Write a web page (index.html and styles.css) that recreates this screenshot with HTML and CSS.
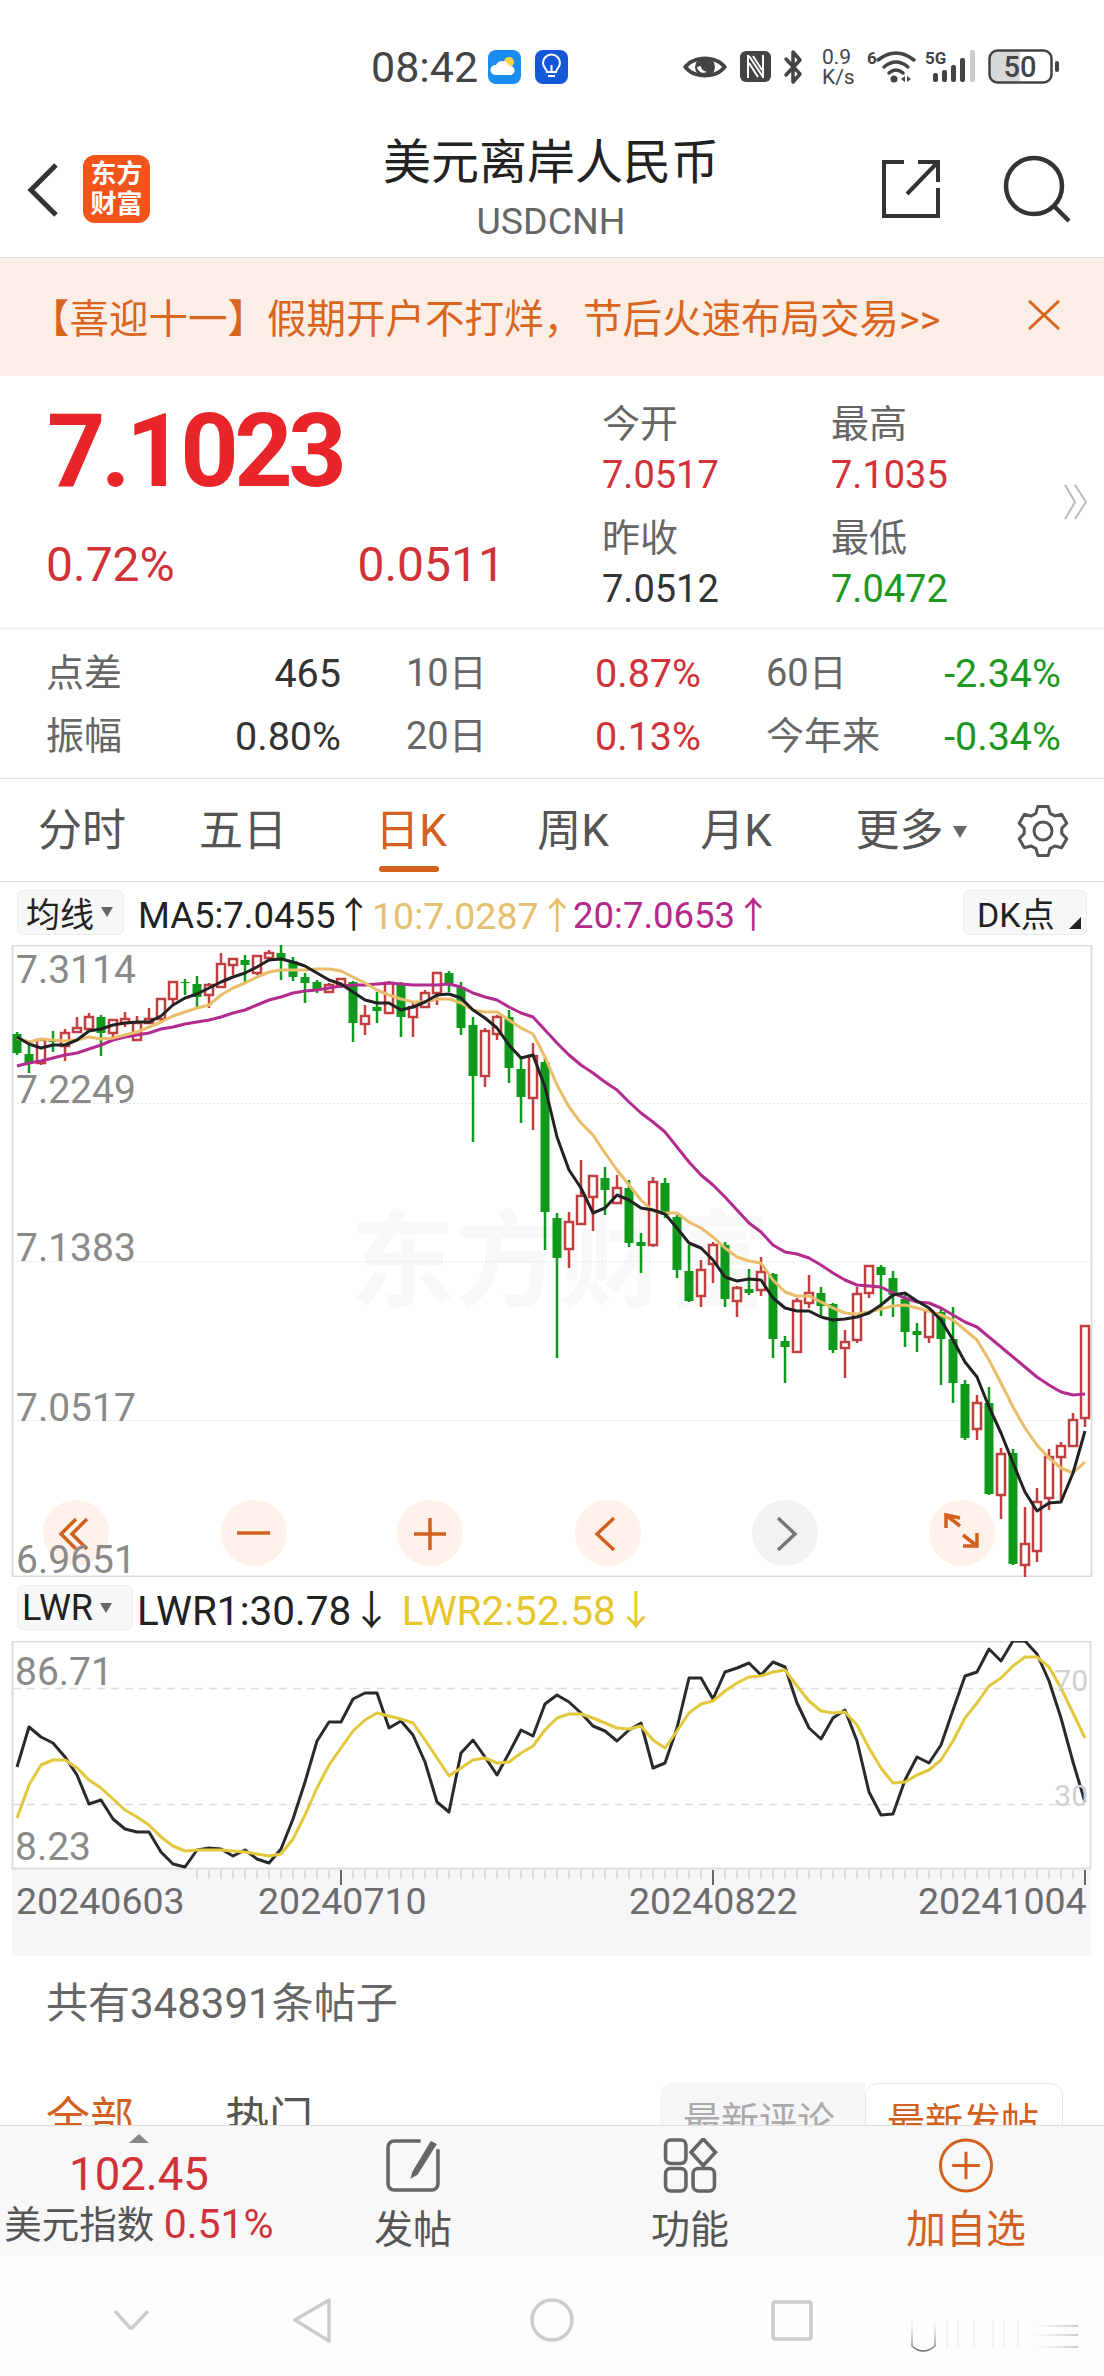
FILE: index.html
```html
<!DOCTYPE html>
<html lang="zh-CN">
<head>
    <meta charset="UTF-8">
    <meta name="viewport" content="width=device-width, initial-scale=1.0">
    <title>美元离岸人民币</title>
    <link rel="stylesheet" href="styles.css">
</head>
<body>
    <div class="status">
        <span class="clock">08:42</span>
        <svg class="app-icon" viewBox="0 0 33 34"><rect width="33" height="34" rx="8" fill="#1a8df0"/><circle cx="21" cy="12" r="5" fill="#f7d34a"/><path d="M7 25a5 5 0 0 1 1-10 7 7 0 0 1 13 1 4.500 4.500 0 0 1 2 9z" fill="#fff"/></svg>
        <svg class="app-icon" viewBox="0 0 33 34"><rect width="33" height="34" rx="8" fill="#1458d8"/><path d="M12 22c0-3-4-4-4-9a8.500 8.500 0 0 1 17 0c0 5-4 6-4 9z" fill="none" stroke="#fff" stroke-width="2"/><path d="M13 26h7M16.500 22v-7" stroke="#fff" stroke-width="2"/></svg>
        <svg class="st-eye" viewBox="0 0 46 30"><path d="M1 15C10 1 36 1 45 15 36 29 10 29 1 15z" fill="#444"/><path d="M6 15C13 6 33 6 40 15 33 24 13 24 6 15z" fill="#fff"/><circle cx="23" cy="15" r="10" fill="#444"/><path d="M15 15c1 5 6 7 10 5-4-1-6-3-6-6z" fill="#fff"/></svg>
        <svg class="st-nfc" viewBox="0 0 31 31"><rect width="31" height="31" rx="6" fill="#444"/><path d="M8 4v23M23 4v23M9 5l14 21M13 5l9 14M9 12l9 14" fill="none" stroke="#fff" stroke-width="2"/></svg>
        <svg class="st-bt" viewBox="0 0 21 36"><path d="M3 10l14 15-7 8V3l7 8L3 26" fill="none" stroke="#444" stroke-width="3.500" stroke-linejoin="round" stroke-linecap="round"/></svg>
        <span class="st-speed"><span>0.9</span><span>K/s</span></span>
        <svg class="st-wifi" viewBox="0 0 48 35"><text x="0" y="15" class="st-tiny">6</text><path d="M11 11Q29-3 47 11M17 18Q29 8 41 18M22 24Q29 18 36 24" fill="none" stroke="#444" stroke-width="3.500" stroke-linecap="round"/><circle cx="27" cy="30" r="3.500" fill="#444"/><path d="M34 30l4-3v6zM40 27l4 3-4 3z" fill="#444"/></svg>
        <svg class="st-signal" viewBox="0 0 50 35"><text x="0" y="15" class="st-tiny">5G</text><g fill="#444"><rect x="8" y="24" width="5" height="9" rx="2"/><rect x="17" y="21" width="5" height="12" rx="2"/><rect x="26" y="16" width="5" height="17" rx="2"/><rect x="35" y="9" width="5" height="24" rx="2"/></g><rect x="45" y="1" width="5" height="32" rx="2" fill="#ccc"/></svg>
        <svg class="st-batt" viewBox="0 0 72 35"><path d="M9 2h23v31H9a7 7 0 0 1-7-7V9a7 7 0 0 1 7-7z" fill="#d8d8d8"/><rect x="1.500" y="1.500" width="62" height="32" rx="8" fill="none" stroke="#444" stroke-width="2.500"/><rect x="67" y="12" width="4" height="11" rx="2" fill="#444"/><text x="32" y="28" text-anchor="middle" class="st-pct">50</text></svg>
    </div>

    <div class="titlebar">
        <svg class="back" viewBox="0 0 32 54"><path d="M29 2L4 27l25 25" fill="none" stroke="#333" stroke-width="5"/></svg>
        <div class="logo"><span>东方</span><span>财富</span></div>
        <div class="title">
            <h1>美元离岸人民币</h1>
            <p>USDCNH</p>
        </div>
        <svg class="share" viewBox="0 0 58 58"><path d="M22 2H2v54h54V28M25 34L55 3M36 2h20v20" fill="none" stroke="#333" stroke-width="4"/></svg>
        <svg class="search" viewBox="0 0 68 68"><circle cx="31" cy="31" r="28" fill="none" stroke="#333" stroke-width="4.500"/><path d="M50 50l16 16" stroke="#333" stroke-width="4.500"/></svg>
    </div>

    <div class="banner">
        <span>【喜迎十一】假期开户不打烊，节后火速布局交易&gt;&gt;</span>
        <svg class="banner-close" viewBox="0 0 32 30"><path d="M1 1l30 28M31 1L1 29" stroke="#d9651f" stroke-width="3"/></svg>
    </div>

    <div class="quote">
        <div class="quote-main">
            <div class="price">7.1023</div>
            <div class="change"><span>0.72%</span><span>0.0511</span></div>
        </div>
        <div class="quote-side">
            <div class="cell"><label>今开</label><b class="up">7.0517</b></div>
            <div class="cell"><label>最高</label><b class="up">7.1035</b></div>
            <div class="cell"><label>昨收</label><b>7.0512</b></div>
            <div class="cell"><label>最低</label><b class="down">7.0472</b></div>
        </div>
        <svg class="more-arrow" viewBox="0 0 25 36"><path d="M2 1l10 17L2 35M12 1l11 17-11 17" fill="none" stroke="#bbb" stroke-width="2"/></svg>
    </div>

    <div class="stats">
        <div class="kv"><label>点差</label><b>465</b></div>
        <div class="kv"><label>10日</label><b class="up">0.87%</b></div>
        <div class="kv"><label>60日</label><b class="down">-2.34%</b></div>
        <div class="kv"><label>振幅</label><b>0.80%</b></div>
        <div class="kv"><label>20日</label><b class="up">0.13%</b></div>
        <div class="kv"><label>今年来</label><b class="down">-0.34%</b></div>
    </div>

    <div class="tabs">
        <span class="tab">分时</span>
        <span class="tab">五日</span>
        <span class="tab tab-on">日K</span>
        <span class="tab">周K</span>
        <span class="tab">月K</span>
        <span class="tab">更多<i class="caret"></i></span>
        <svg class="gear" viewBox="0 0 52 52"><path d="M18.900 8.400L20.800 1.600H31.200L33.100 8.400 37.700 11 44.600 9.300 49.800 18.300 44.800 23.400V28.600L49.800 33.700 44.600 42.700 37.700 41 33.100 43.600 31.200 50.400H20.800L18.900 43.600 14.300 41 7.400 42.700 2.200 33.700 7.200 28.600V23.400L2.200 18.300 7.400 9.300 14.300 11z" fill="none" stroke="#555" stroke-width="3" stroke-linejoin="round"/><circle cx="26" cy="26" r="9" fill="none" stroke="#555" stroke-width="3"/></svg>
    </div>

    <div class="chart-head">
        <span class="pick pick-ma">均线<i class="caret"></i></span>
        <span class="ma ma5">MA5:7.0455<i class="arr">↑</i></span>
        <span class="ma ma10">10:7.0287<i class="arr">↑</i></span>
        <span class="ma ma20">20:7.0653<i class="arr">↑</i></span>
        <span class="pick pick-dk">DK点<i class="corner"></i></span>
    </div>

    <svg id="kline" class="chart" viewBox="0 945 1104 632">
        <text x="350" y="1298" class="watermark">东方财富</text>
        <rect x="12.500" y="945.500" width="1079" height="631" fill="none" stroke="#ddd" stroke-width="2"/>
        <path d="M13 1103.500H1090M13 1261.500H1090M13 1420.500H1090" stroke="#e6e6e6" stroke-dasharray="2 2"/>
        <g id="candles"></g>
        <g id="averages"></g>
        <g class="btn-bg">
            <circle cx="76" cy="1533" r="33"/><circle cx="254" cy="1533" r="33"/><circle cx="430" cy="1533" r="33"/><circle cx="608" cy="1533" r="33"/><circle cx="785" cy="1533" r="33" class="btn-off"/><circle cx="962" cy="1533" r="33"/>
        </g>
        <g class="btn-ic">
            <path d="M76 1519l-15 15 15 15M87 1519l-15 15 15 15"/>
            <path d="M237 1533h33"/>
            <path d="M414 1534h32M430 1518v32"/>
            <path d="M614 1518l-17 16 17 16"/>
            <path d="M778 1518l17 16-17 16" class="ic-off"/>
            <path d="M946 1528v-13l14 3M946 1515l14 11M963 1546h14v-13M977 1546l-14-11"/>
        </g>
        <g class="axis-y">
            <text x="16" y="983">7.3114</text>
            <text x="16" y="1103">7.2249</text>
            <text x="16" y="1261">7.1383</text>
            <text x="16" y="1421">7.0517</text>
            <text x="16" y="1573">6.9651</text>
        </g>
    </svg>

    <div class="chart-head lwr-head">
        <span class="pick pick-lwr">LWR<i class="caret"></i></span>
        <span class="ma">LWR1:30.78<i class="arr">↓</i></span>
        <span class="ma lwr2">LWR2:52.58<i class="arr">↓</i></span>
    </div>

    <svg id="lwr" class="chart chart-low" viewBox="0 1641 1104 315">
        <rect x="12" y="1868" width="1079" height="88" fill="#f6f6f8"/>
        <rect x="12.500" y="1641.500" width="1078" height="227" fill="none" stroke="#ddd" stroke-width="2"/>
        <path d="M13 1688.500H1090M13 1804.500H1090" stroke="#ddd" stroke-width="1.500" stroke-dasharray="8 6"/>
        <g id="lwr-lines"></g>
        <g class="axis-y">
            <text x="15" y="1685">86.71</text>
            <text x="15" y="1860">8.23</text>
        </g>
        <g class="axis-side">
            <text x="1088" y="1691" text-anchor="end">70</text>
            <text x="1088" y="1806" text-anchor="end">30</text>
        </g>
        <g id="ticks"></g>
        <g class="axis-x">
            <text x="16" y="1914">20240603</text>
            <text x="258" y="1914">20240710</text>
            <text x="629" y="1914">20240822</text>
            <text x="918" y="1914">20241004</text>
        </g>
    </svg>

    <div class="posts">
        <div class="posts-count">共有348391条帖子</div>
        <div class="posts-tabs">
            <span class="post-tab post-on">全部</span>
            <span class="post-tab">热门</span>
            <div class="seg">
                <span class="seg-item">最新评论</span>
                <span class="seg-item seg-on">最新发帖</span>
            </div>
        </div>
    </div>

    <div class="bottom">
        <div class="bt-index">
            <i class="tri-up"></i>
            <div class="bt-num">102.45</div>
            <div class="bt-name">美元指数 <span class="up">0.51%</span></div>
        </div>
        <div class="bt-item">
            <svg class="bt-icon" viewBox="0 0 55 54"><path d="M35 3H9a6 6 0 0 0-6 6v36a6 6 0 0 0 6 6h37a6 6 0 0 0 6-6V11" fill="none" stroke="#666" stroke-width="3.500"/><path d="M25 40l2-7L45 3l6 3-19 30z" fill="#666"/></svg>
            <span>发帖</span>
        </div>
        <div class="bt-item">
            <svg class="bt-icon" viewBox="0 0 52 54"><g fill="none" stroke="#666" stroke-width="3.500"><rect x="2" y="2" width="20" height="23" rx="5"/><path d="M39 1l12 13-12 13-12-13z"/><rect x="2" y="30" width="20" height="22" rx="5"/><rect x="29" y="30" width="21" height="22" rx="5"/></g></svg>
            <span>功能</span>
        </div>
        <div class="bt-item bt-add">
            <svg class="bt-icon" viewBox="0 0 56 56"><circle cx="28" cy="28" r="26" fill="none" stroke="#d2601e" stroke-width="3"/><path d="M14 28h28M28 14v28" stroke="#d2601e" stroke-width="3"/></svg>
            <span>加自选</span>
        </div>
    </div>

    <div class="nav">
        <svg class="nav-down" viewBox="0 0 37 20"><path d="M2 1l16 18L35 1" fill="none" stroke="#ccc" stroke-width="3.500"/></svg>
        <svg class="nav-back" viewBox="0 0 39 45"><path d="M37 2v41L3 22z" fill="none" stroke="#ccc" stroke-width="3.500" stroke-linejoin="round"/></svg>
        <svg class="nav-home" viewBox="0 0 44 44"><circle cx="22" cy="22" r="20" fill="none" stroke="#ccc" stroke-width="3.500"/></svg>
        <svg class="nav-recent" viewBox="0 0 42 41"><rect x="2" y="2" width="38" height="37" rx="2" fill="none" stroke="#ccc" stroke-width="3.500"/></svg>
        <svg class="nav-smudge" viewBox="0 0 195 38">
            <defs>
                <linearGradient id="fadeDown" gradientUnits="userSpaceOnUse" x1="0" y1="0" x2="0" y2="36"><stop offset="0" stop-color="#ccc" stop-opacity="0"/><stop offset="1" stop-color="#555"/></linearGradient>
                <linearGradient id="fadeRight" gradientUnits="userSpaceOnUse" x1="145" y1="0" x2="193" y2="0"><stop offset="0" stop-color="#ddd" stop-opacity="0"/><stop offset="1" stop-color="#bbb"/></linearGradient>
            </defs>
            <path d="M27 2V28Q38 38 50 28V2" fill="none" stroke="url(#fadeDown)" stroke-width="1.500"/>
            <path d="M62 2V30M73 2V30M89 2V30M108 2V30M119 2V30M133 2V30" stroke="#efefef" stroke-width="1.500"/>
            <path d="M145 8H193M145 17H193M145 29H193" stroke="url(#fadeRight)" stroke-width="1.500"/>
        </svg>
    </div>

    <script src="chart.js"></script>
</body>
</html>
```

FILE: styles.css
```css
* {
    box-sizing: border-box;
}
body {
    margin: 0;
    width: 1104px;
    background-color: #fff;
    color: #333;
    font-family: Roboto, "Noto Sans CJK SC", sans-serif;
}
h1, p {
    margin: 0;
    font-weight: normal;
}
label, b {
    font-weight: normal;
}
i {
    font-style: normal;
}
.up {
    color: #d03238;
}
.down {
    color: #1c971f;
}

/* status bar */
.status {
    display: flex;
    align-items: center;
    height: 135px;
    padding: 0 0 2px 371px;
}
.status svg {
    overflow: visible;
}
.clock {
    font-size: 43px;
    color: #444;
    width: 117px;
}
.app-icon {
    width: 33px;
    height: 34px;
    margin-right: 14px;
}
.st-eye {
    width: 46px;
    height: 30px;
    margin-left: 100px;
}
.st-nfc {
    width: 31px;
    height: 31px;
    margin-left: 12px;
}
.st-bt {
    width: 21px;
    height: 36px;
    margin-left: 12px;
}
.st-speed {
    display: flex;
    flex-direction: column;
    width: 40px;
    margin-left: 18px;
    font-size: 21px;
    line-height: 20px;
    color: #444;
}
.st-wifi {
    width: 48px;
    height: 35px;
    margin-left: 5px;
}
.st-signal {
    width: 50px;
    height: 35px;
    margin-left: 10px;
}
.st-batt {
    width: 72px;
    height: 35px;
    margin-left: 13px;
}
.st-tiny {
    font-size: 17px;
    font-weight: bold;
    fill: #444;
}
.st-pct {
    font-size: 29px;
    font-weight: 500;
    fill: #444;
}

/* title bar */
.titlebar {
    display: flex;
    align-items: flex-start;
    height: 123px;
    padding-top: 20px;
    border-bottom: 1px solid #dcdcdc;
}
.back {
    width: 32px;
    height: 54px;
    margin: 8px 0 0 27px;
}
.logo {
    display: flex;
    flex-direction: column;
    align-items: center;
    justify-content: center;
    width: 67px;
    height: 68px;
    margin-left: 24px;
    border-radius: 12px;
    background-color: #f2541b;
    color: #fff;
    font-size: 26px;
    font-weight: bold;
    line-height: 30px;
}
.title {
    width: 336px;
    margin-left: 233px;
    margin-right: -2px;
    text-align: center;
}
.title h1 {
    font-size: 48px;
    line-height: 56px;
    color: #222;
    margin-top: -20px;
}
.title p {
    font-size: 37.500px;
    line-height: 44px;
    color: #666;
    margin-top: 8px;
}
.share {
    width: 58px;
    height: 58px;
    margin: 5px 0 0 165px;
}
.search {
    width: 68px;
    height: 68px;
    margin-left: 63px;
}

/* promo banner */
.banner {
    display: flex;
    align-items: center;
    height: 118px;
    padding: 0 44px 4px 30px;
    background-color: #fbeee6;
    color: #d9651f;
    font-size: 39.500px;
}
.banner-close {
    width: 32px;
    height: 30px;
    margin-left: auto;
}

/* price block */
.quote {
    display: flex;
    height: 254px;
    padding: 25px 0 0 46px;
    border-bottom: 3px solid #f3f3f3;
}
.quote-main {
    width: 556px;
}
.price {
    height: 100px;
    margin-left: 1px;
    font-size: 102px;
    font-weight: bold;
    line-height: 100px;
    letter-spacing: -4.500px;
    color: #e8262a;
}
.change {
    display: flex;
    justify-content: space-between;
    width: 459px;
    margin-top: 39px;
    font-size: 48px;
    line-height: 50px;
    color: #d03238;
}
.quote-side {
    display: grid;
    grid-template-columns: 229px 229px;
    row-gap: 17px;
    align-content: start;
}
.cell {
    display: flex;
    flex-direction: column;
    height: 97px;
    font-size: 38px;
    line-height: 46px;
}
.cell label {
    color: #666;
}
.cell b {
    margin-top: 5px;
}
.more-arrow {
    width: 25px;
    height: 36px;
    margin: 83px 0 0 3px;
}

/* ten day / sixty day table */
.stats {
    display: grid;
    grid-template-columns: repeat(3, 295px);
    grid-auto-rows: 63px;
    column-gap: 65px;
    align-content: start;
    height: 149px;
    padding: 12px 0 0 46px;
    border-bottom: 1px solid #ddd;
    font-size: 38px;
    line-height: 63px;
}
.kv {
    display: flex;
    justify-content: space-between;
}
.kv label {
    color: #666;
}
.kv b {
    font-size: 39.500px;
}

/* period tabs */
.tabs {
    display: grid;
    grid-template-columns: 164px 158px 178px 146px 180px 170px 94px;
    align-items: center;
    height: 103px;
    padding-top: 2px;
    border-bottom: 1px solid #ddd;
}
.tab {
    position: relative;
    font-size: 44px;
    line-height: 60px;
    color: #555;
    text-align: center;
}
.tab-on {
    color: #d2601e;
}
.tab-on::after {
    content: "";
    position: absolute;
    left: 57px;
    top: 65px;
    width: 60px;
    height: 6px;
    border-radius: 3px;
    background-color: #d2601e;
}
.caret {
    display: inline-block;
    width: 0;
    height: 0;
    margin-left: 9px;
    vertical-align: 8px;
    border-left: 7px solid transparent;
    border-right: 7px solid transparent;
    border-top: 12px solid #666;
}
.gear {
    width: 52px;
    height: 52px;
    margin-left: 21px;
}

/* chart legends */
.chart-head {
    display: flex;
    align-items: center;
    height: 63px;
    padding: 0 0 3px 17px;
    font-size: 36.500px;
    white-space: nowrap;
}
.pick {
    display: flex;
    align-items: center;
    height: 45px;
    border: 1px solid #ececec;
    border-radius: 6px;
    background-color: #f6f7f7;
    font-size: 34px;
    color: #222;
}
.pick-ma {
    width: 107px;
    padding-left: 8px;
}
.pick-ma .caret, .pick-lwr .caret {
    margin-left: 7px;
    vertical-align: 0;
    border-left-width: 6px;
    border-right-width: 6px;
    border-top-width: 10px;
}
.pick-dk {
    position: relative;
    width: 124px;
    padding-left: 13px;
    margin-left: auto;
    margin-right: 17px;
}
.corner {
    position: absolute;
    right: 5px;
    bottom: 5px;
    border-left: 12px solid transparent;
    border-bottom: 12px solid #222;
}
.ma {
    color: #222;
}
.ma5 {
    margin-left: 14px;
}
.ma10 {
    font-size: 37.500px;
    color: #e6c06c;
}
.ma20 {
    margin-left: -3px;
    color: #b5298b;
}
.lwr-head {
    height: 64px;
    font-size: 40.500px;
}
.pick-lwr {
    width: 116px;
    padding-left: 4px;
    margin-right: 4px;
    font-size: 36px;
}
.lwr2 {
    margin-left: 10px;
    color: #e8c62e;
}

/* charts */
.chart {
    display: block;
    width: 1104px;
    height: 632px;
}
.chart-low {
    height: 315px;
}
.watermark {
    font-size: 105px;
    font-weight: bold;
    fill: #f8f8f8;
}
.btn-bg circle {
    fill: #fdf1ea;
}
.btn-bg .btn-off {
    fill: #f2f2f2;
}
.btn-ic path {
    fill: none;
    stroke: #d2601e;
    stroke-width: 3.500;
}
.btn-ic .ic-off {
    stroke: #777;
}
.axis-y text {
    font-size: 39px;
    fill: #8a8a8a;
}
.axis-side text {
    font-size: 30px;
    fill: #d0d0d0;
}
.axis-x text {
    font-size: 37.500px;
    fill: #6c6c6c;
}

/* posts */
.posts {
    height: 169px;
    padding-top: 23px;
    overflow: hidden;
}
.posts-count {
    padding-left: 46px;
    font-size: 42px;
    line-height: 50px;
    color: #666;
}
.posts-tabs {
    display: flex;
    align-items: flex-start;
    margin-top: 54px;
    padding-left: 46px;
}
.post-tab {
    width: 179px;
    padding-top: 11px;
    font-size: 44px;
    line-height: 50px;
    color: #555;
}
.post-on {
    color: #d2601e;
}
.seg {
    display: flex;
    margin-left: 256px;
    font-size: 38px;
    line-height: 50px;
}
.seg-item {
    width: 205px;
    height: 90px;
    padding: 13px 0 0 23px;
    border-radius: 12px 0 0 0;
    background-color: #f6f6f6;
    color: #aaa;
}
.seg-on {
    width: 198px;
    padding-left: 21px;
    border: 1px solid #e8e8e8;
    border-radius: 12px 12px 0 0;
    background-color: #fff;
    color: #d2601e;
}

/* bottom bar */
.bottom {
    display: grid;
    grid-template-columns: 278px 270px 284px 268px;
    height: 131px;
    border-top: 1px solid #ddd;
    background-color: #f8f8f9;
}
.bt-index {
    display: flex;
    flex-direction: column;
    align-items: center;
    padding-top: 8px;
}
.tri-up {
    width: 0;
    height: 0;
    border-left: 10px solid transparent;
    border-right: 10px solid transparent;
    border-bottom: 9px solid #888;
}
.bt-num {
    margin-top: 7px;
    font-size: 45.500px;
    line-height: 50px;
    color: #d03238;
}
.bt-name {
    margin-top: 1px;
    font-size: 37.500px;
    line-height: 46px;
    color: #555;
    white-space: nowrap;
}
.bt-name span {
    font-size: 41px;
}
.bt-item {
    display: flex;
    flex-direction: column;
    align-items: center;
    padding-top: 12px;
    font-size: 39px;
    line-height: 46px;
    color: #555;
}
.bt-icon {
    width: 56px;
    height: 55px;
    margin-bottom: 14px;
}
.bt-add {
    color: #d2601e;
}
.bt-add span {
    font-size: 40px;
}

/* system navigation */
.nav {
    display: flex;
    align-items: center;
    height: 120px;
    padding: 8px 0 0 113px;
    background-color: #fdfdfd;
}
.nav-down {
    width: 37px;
    height: 20px;
}
.nav-back {
    width: 39px;
    height: 45px;
    margin-left: 142px;
}
.nav-home {
    width: 44px;
    height: 44px;
    margin-left: 199px;
}
.nav-recent {
    width: 42px;
    height: 41px;
    margin-left: 197px;
}
.nav-smudge {
    align-self: flex-start;
    width: 195px;
    height: 38px;
    margin: 54px 0 0 72px;
}
```

FILE: chart.js
```js
// y values are page pixels, x comes from the candle index
const STEP = 12;
const FIRST_X = 17;

// type, high, top, bottom, low
const candles = [
    ['g',1032,1034,1053,1055],['g',1045,1054,1063,1073],['r',1038,1040,1063,1065],['g',1031,1040,1042,1052],
    ['r',1029,1033,1046,1061],['r',1017,1028,1032,1032],['r',1013,1017,1029,1031],['g',1015,1017,1033,1056],
    ['r',1019,1020,1033,1037],['r',1012,1019,1023,1027],['r',1016,1023,1040,1041],['r',1008,1019,1023,1023],
    ['r',998,999,1019,1022],['r',981,982,999,1004],['g',979,982,983,995],['g',976,984,997,1007],
    ['r',983,985,995,1008],['r',953,964,987,987],['r',958,959,965,975],['g',955,960,965,983],
    ['r',955,956,973,975],['r',950,953,958,960],['g',945,953,959,980],['g',957,961,977,981],
    ['g',973,977,983,1003],['g',980,982,989,993],['r',983,985,992,992],['r',978,979,985,988],
    ['g',981,982,1023,1042],['r',1005,1016,1024,1035],['g',992,1007,1011,1023],['r',981,983,1013,1014],
    ['g',982,985,1017,1037],['r',1003,1007,1017,1037],['r',990,993,1007,1008],['r',972,973,993,1005],
    ['g',971,973,984,992],['g',982,987,1028,1035],['g',1017,1025,1076,1142],['r',1028,1031,1076,1087],
    ['r',1015,1017,1034,1040],['g',1010,1017,1068,1083],['g',1058,1069,1097,1123],['r',1043,1056,1098,1130],
    ['g',1057,1062,1212,1250],['g',1213,1218,1258,1358],['r',1212,1222,1249,1268],['r',1160,1196,1224,1225],
    ['r',1175,1176,1197,1231],['g',1167,1178,1190,1215],['r',1175,1188,1203,1203],['g',1180,1188,1243,1247],
    ['g',1233,1242,1246,1273],['r',1177,1182,1245,1247],['g',1178,1183,1215,1218],['g',1215,1217,1270,1278],
    ['g',1245,1271,1301,1302],['r',1260,1270,1296,1307],['r',1242,1245,1264,1283],['g',1242,1245,1299,1307],
    ['r',1286,1288,1301,1317],['g',1269,1289,1293,1295],['r',1257,1272,1290,1296],['g',1273,1274,1339,1358],
    ['g',1336,1341,1347,1383],['r',1298,1301,1352,1352],['r',1275,1293,1303,1308],['g',1287,1293,1306,1317],
    ['g',1303,1304,1350,1353],['r',1330,1342,1348,1378],['r',1287,1294,1340,1343],['r',1265,1266,1293,1298],
    ['g',1265,1267,1275,1316],['g',1271,1278,1295,1317],['g',1295,1299,1332,1347],['g',1323,1331,1335,1352],
    ['r',1308,1311,1337,1343],['g',1309,1312,1339,1385],['g',1307,1339,1383,1403],['g',1380,1384,1438,1440],
    ['r',1395,1403,1429,1440],['g',1387,1403,1494,1495],['r',1448,1454,1495,1519],['g',1449,1453,1564,1565],
    ['r',1507,1544,1565,1577],['r',1488,1502,1551,1562],['r',1449,1457,1498,1510],['r',1442,1446,1457,1502],
    ['r',1413,1420,1446,1447],['r',1325,1326,1418,1427]
];

const ma5 = [1037,1044,1048,1045,1045,1040,1031,1029,1025,1023,1022,1022,1016,1005,998,994,988,982,977,973,
    967,960,959,962,966,973,980,984,992,1000,1003,1003,1010,1007,1002,995,994,998,1010,1018,
    1028,1045,1058,1055,1087,1137,1170,1188,1213,1208,1195,1200,1208,1210,1214,1228,1243,1248,1260,1277,
    1281,1279,1280,1298,1308,1311,1311,1317,1320,1319,1317,1313,1305,1295,1293,1301,1308,1320,1340,1362,
    1377,1407,1433,1463,1492,1511,1503,1502,1473,1431];
const ma10 = [1038,1042,1039,1040,1041,1040,1037,1039,1038,1035,1032,1027,1022,1016,1012,1008,1005,995,988,983,
    977,972,970,970,970,969,969,971,977,983,990,995,999,1002,1002,999,999,1003,1010,1012,
    1012,1020,1028,1034,1057,1085,1107,1123,1135,1153,1170,1185,1200,1211,1213,1213,1222,1228,1237,1248,
    1257,1261,1263,1280,1292,1296,1296,1302,1308,1313,1314,1312,1309,1306,1305,1308,1311,1315,1320,1330,
    1340,1360,1383,1407,1428,1445,1458,1468,1473,1462];
const ma20 = [1066,1063,1061,1058,1055,1053,1049,1045,1040,1037,1035,1033,1029,1027,1024,1022,1020,1017,1013,1010,
    1005,1000,997,993,991,990,988,986,985,985,984,983,984,985,985,985,984,987,993,997,
    1000,1007,1013,1017,1030,1043,1055,1065,1073,1082,1090,1102,1113,1122,1132,1147,1162,1175,1185,1197,
    1210,1223,1232,1245,1252,1254,1258,1265,1273,1280,1285,1286,1287,1293,1298,1302,1303,1308,1315,1322,
    1327,1337,1347,1357,1367,1377,1385,1392,1395,1394];

const lwr1 = [1767,1727,1737,1743,1757,1775,1804,1800,1819,1829,1832,1832,1852,1864,1867,1850,1848,1849,1856,1850,
    1859,1863,1849,1819,1782,1741,1722,1722,1699,1693,1693,1728,1721,1735,1762,1802,1812,1753,1740,1757,
    1775,1753,1730,1736,1704,1695,1702,1713,1726,1731,1741,1730,1723,1768,1763,1728,1678,1678,1699,1672,
    1668,1663,1675,1662,1667,1703,1728,1739,1718,1710,1741,1792,1815,1814,1780,1757,1763,1745,1710,1676,
    1672,1649,1661,1641,1641,1654,1681,1718,1762,1802];
const lwr2 = [1818,1785,1765,1760,1760,1768,1780,1788,1799,1810,1817,1825,1837,1846,1851,1850,1850,1850,1851,1852,
    1854,1856,1854,1839,1815,1788,1765,1748,1731,1720,1713,1716,1719,1723,1740,1758,1776,1768,1760,1758,
    1763,1762,1753,1746,1730,1718,1714,1714,1718,1723,1728,1729,1726,1740,1748,1731,1713,1704,1701,1691,
    1683,1677,1676,1672,1670,1686,1701,1711,1713,1712,1725,1748,1768,1783,1782,1775,1770,1760,1741,1718,
    1703,1686,1678,1666,1657,1657,1667,1688,1713,1738];

const SVG_NS = 'http://www.w3.org/2000/svg';

function add(parent, tag, attrs) {
    const el = document.createElementNS(SVG_NS, tag);
    for (const key in attrs) {
        el.setAttribute(key, attrs[key]);
    }
    parent.appendChild(el);
    return el;
}

function xAt(i) {
    return FIRST_X + i * STEP;
}

function drawLine(parent, values, color, width) {
    const points = values.map((y, i) => xAt(i) + ',' + y).join(' ');
    add(parent, 'polyline', {
        points: points,
        fill: 'none',
        stroke: color,
        'stroke-width': width,
        'stroke-linejoin': 'round'
    });
}

const candleGroup = document.getElementById('candles');
candles.forEach((c, i) => {
    const x = xAt(i);
    const color = c[0] === 'r' ? '#bf4040' : '#0f9a1e';
    add(candleGroup, 'line', { x1: x, x2: x, y1: c[1], y2: c[4], stroke: color, 'stroke-width': 2.5 });
    if (c[0] === 'r') {
        add(candleGroup, 'rect', { x: x - 4, y: c[2], width: 8, height: c[3] - c[2], fill: '#fff', stroke: color, 'stroke-width': 2.5 });
    } else {
        add(candleGroup, 'rect', { x: x - 4.5, y: c[2], width: 9, height: c[3] - c[2], fill: color });
    }
});

const averages = document.getElementById('averages');
drawLine(averages, ma20, '#b32b8e', 3);
drawLine(averages, ma10, '#e9bd6a', 3);
drawLine(averages, ma5, '#222', 3);

const lwrLines = document.getElementById('lwr-lines');
drawLine(lwrLines, lwr1, '#2a2a2a', 3);
drawLine(lwrLines, lwr2, '#e3c83c', 3);

// date ticks under the lower chart, every 31st one is a long one
const ticks = document.getElementById('ticks');
for (let i = 15; i < candles.length; i++) {
    const major = (i - 27) % 31 === 0;
    add(ticks, 'line', {
        x1: xAt(i),
        x2: xAt(i),
        y1: 1870,
        y2: major ? 1885 : 1879,
        stroke: major ? '#666' : '#c4c4c4',
        'stroke-width': major ? 2 : 1
    });
}
```
